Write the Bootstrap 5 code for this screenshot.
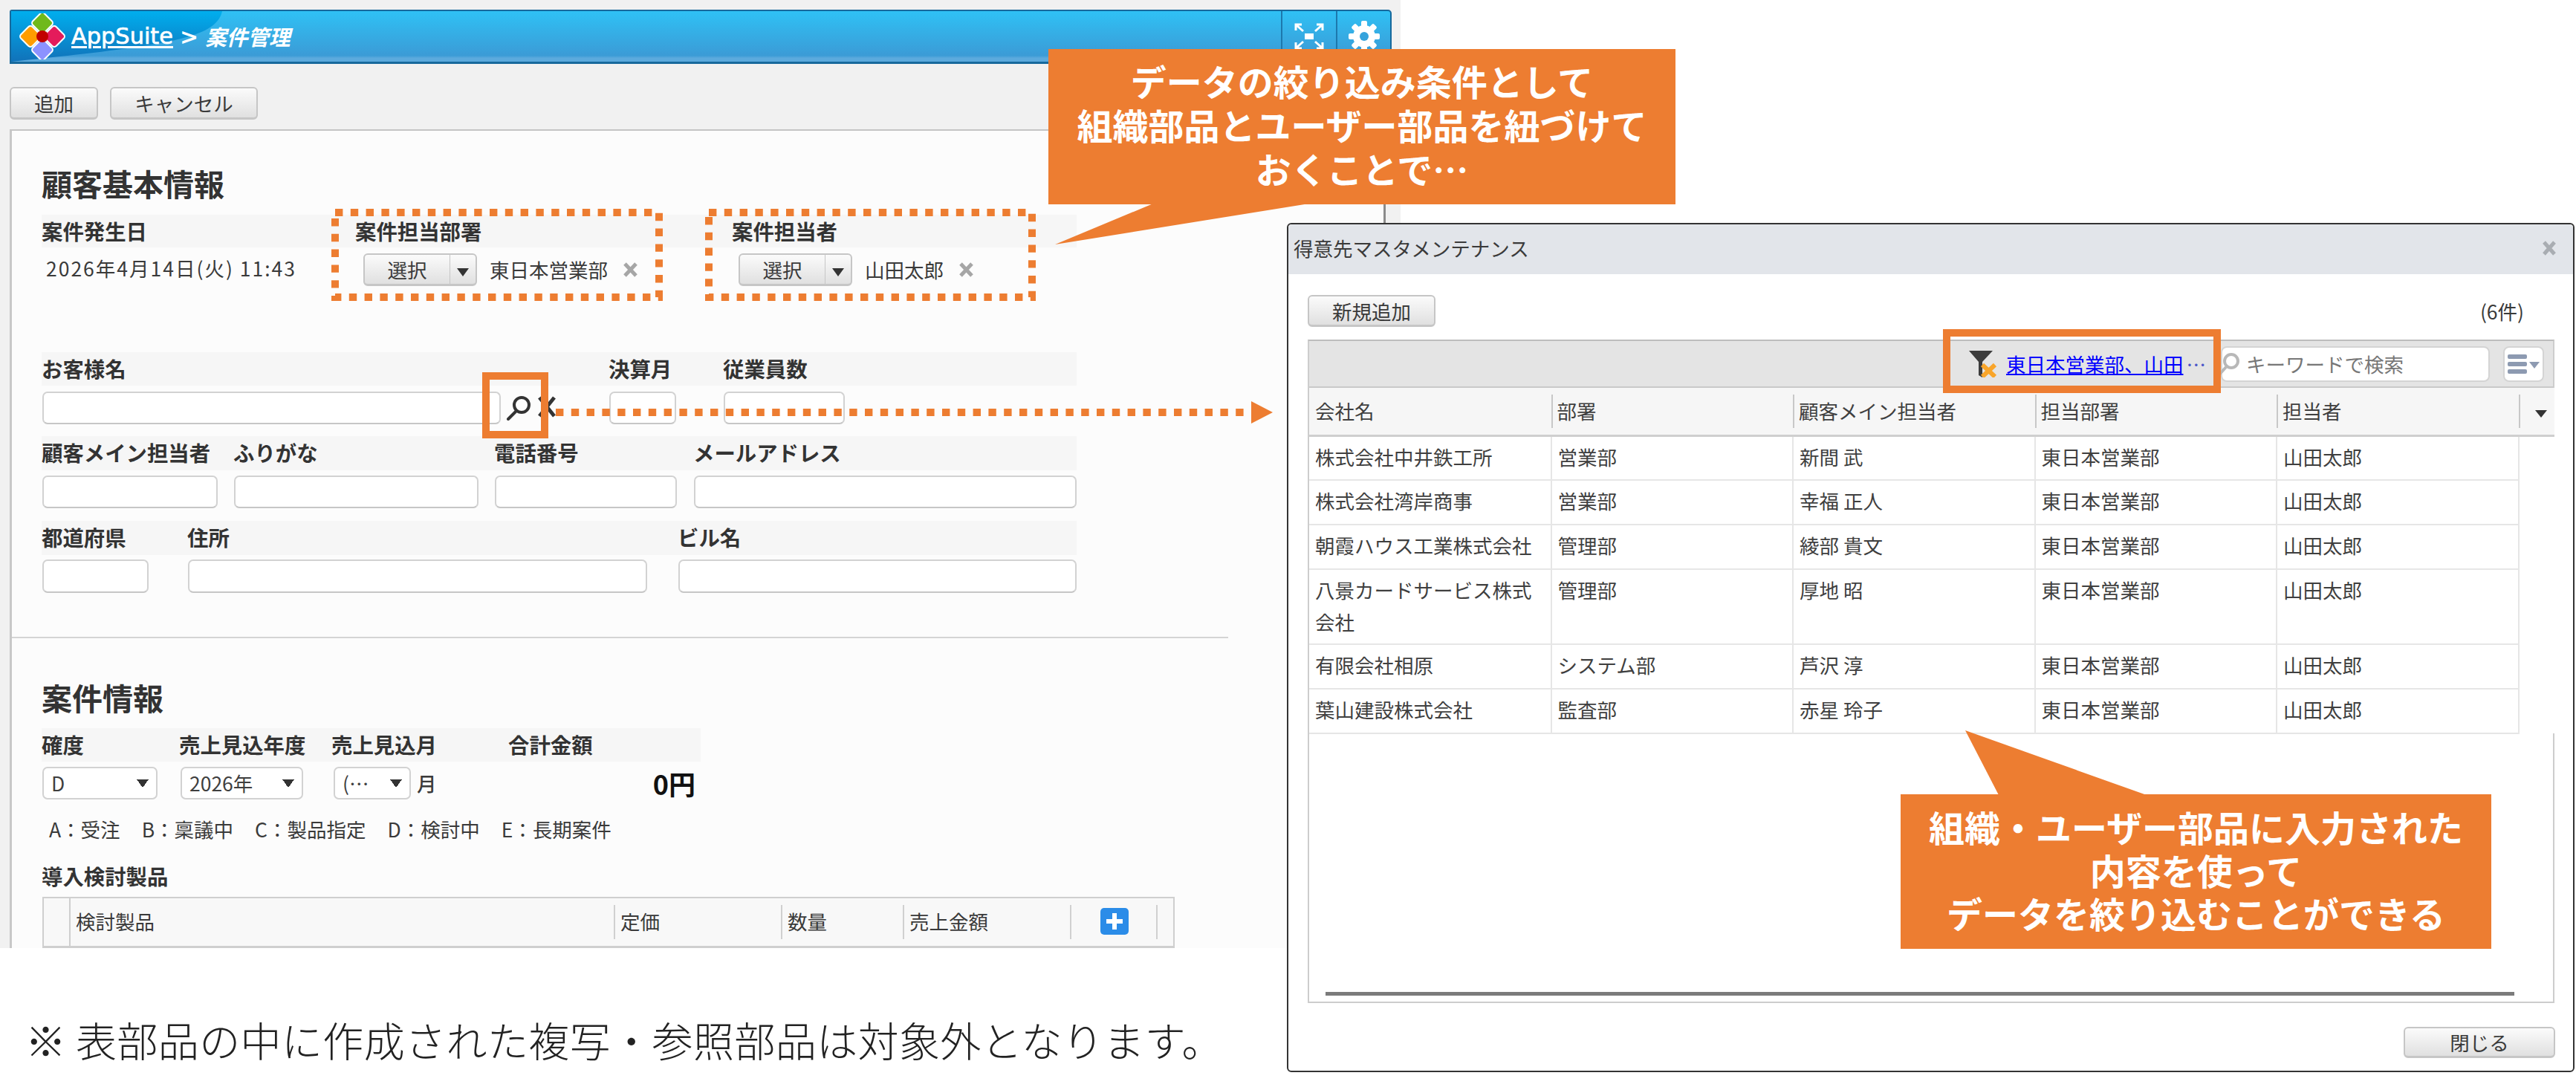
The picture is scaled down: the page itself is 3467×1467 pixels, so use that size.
<!DOCTYPE html>
<html lang="ja">
<head>
<meta charset="UTF-8">
<title>AppSuite 案件管理</title>
<link href="https://cdn.jsdelivr.net/npm/bootstrap@5.3.0/dist/css/bootstrap.min.css" rel="stylesheet">
<style>
    body {
        margin: 0;
        width: 3467px;
        height: 1467px;
        overflow: hidden;
        position: relative;
        background: #fff;
        color: #3a3a3a;
        font-family: "Noto Sans CJK JP", "Liberation Sans", sans-serif;
        font-size: 26.5px;
    }

    /* left application */
    .app-shell { width: 1885px; height: 1276px; overflow: hidden; background: #f1f1f1; padding: 13px 0 0 13px; }
    .app-head {
        position: relative;
        width: 1860px;
        height: 73px;
        border: 2px solid #17699c;
        border-bottom-width: 3px;
        border-radius: 3px 5px 0 0;
        background: linear-gradient(#2fc1f5, #3b9bd6 88%, #5caadd 93%, #5caadd);
        overflow: hidden;
    }
    .head-lens { position: absolute; left: 0; top: 0; width: 320px; height: 70px; }
    .head-line { position: relative; height: 100%; padding-left: 11px; color: #fff; }
    .app-link { color: #fff; font-family: "DejaVu Sans", sans-serif; font-size: 30.4px; margin-left: 8px; text-underline-offset: 3px; -webkit-text-stroke: 0.7px #fff; }
    .crumb-gt { font-family: "DejaVu Sans", sans-serif; font-size: 30px; font-weight: 700; margin-left: 9px; }
    .crumb-now { font-size: 28.6px; font-style: italic; font-weight: 700; margin-left: 9px; }
    .head-tool { width: 74px; height: 100%; border-left: 2px solid #1d78ad; }
    .head-gear { width: 73px; }

    .tool-row { margin-top: 31px; height: 44px; }
    .ui-btn {
        height: 44px;
        padding: 0;
        border: 2px solid #c6c6c6;
        border-bottom-width: 3px;
        border-radius: 6px;
        background: linear-gradient(#fbfbfb, #e0e0e0);
        color: #3a3a3a;
        font-size: 26.5px;
        line-height: 38px;
    }
    .btn-add { width: 119px; }
    .btn-cancel { width: 199px; }

    .form-sheet {
        width: 1852px;
        height: 1200px;
        margin-top: 13px;
        background: #fcfcfc;
        border-top: 2px solid #c4c4c4;
        border-left: 3px solid #c8c8c8;
        border-right: 3px solid #8b8b8b;
    }
    .sec-title { margin: 42px 0 15px 40px; height: 56px; font-size: 41px; line-height: 56px; font-weight: 700; color: #333; }
    .sec-title-b { margin: 51px 0 14px 40px; }
    .lbl-bar { display: grid; margin-left: 40px; width: 1393px; height: 45px; background: #f6f6f6; font-size: 28.4px; line-height: 44px; font-weight: 700; color: #333; white-space: nowrap; }
    .val-row { display: grid; margin-left: 40px; width: 1393px; align-items: center; }
    .cols-a { grid-template-columns: 422px 507px 1fr; }
    .cols-b { grid-template-columns: 763px 154px 1fr; }
    .cols-c { grid-template-columns: 258px 351px 268px 1fr; }
    .cols-d { grid-template-columns: 196px 660px 1fr; }
    .cols-e { grid-template-columns: 185px 205px 238px 1fr; width: 887px; }

    .bar-1 { height: 44px; }
    .gap-a { margin-top: 8px; height: 42px; }
    .bar-2 { margin-top: 91px; }
    .gap-i { margin-top: 8px; height: 44px; }
    .bar-3 { margin-top: 16px; height: 46px; }
    .bar-4 { margin-top: 17px; height: 46px; }
    .gap-i-4 { margin-top: 6px; height: 45px; }
    .gap-i-3 { margin-top: 7px; height: 44px; }

    .date-val { padding: 0 0 4px 6px; white-space: nowrap; letter-spacing: 2px; }
    .pick-a { padding-left: 11px; }
    .pick-b { padding-left: 9px; }
    .pick-name { margin-left: 17px; white-space: nowrap; }
    .pick-x { margin-left: 20px; }
    .pick-main { width: 117px; border-radius: 6px 0 0 6px; border-right-width: 1px; }
    .pick-caret { width: 37px; border-radius: 0 6px 6px 0; border-left-width: 1px; }
    .pick-caret::before { content: ""; display: inline-block; border: 8px solid transparent; border-top: 11px solid #333; border-bottom: 0; vertical-align: 2px; }

    .ui-input { height: 100%; margin-left: 1px; padding: 0 8px; border: 2px solid #d2d2d2; border-bottom-color: #c6c6c6; border-radius: 7px; background: #fff; box-shadow: none; }
    .w-90 { width: 90px; }
    .w-143 { width: 143px; }
    .w-163 { width: 163px; }
    .w-236 { width: 236px; }
    .w-245 { width: 245px; }
    .w-329 { width: 329px; }
    .w-515 { width: 515px; }
    .w-536 { width: 536px; }
    .w-617 { width: 617px; }
    .w-618 { width: 618px; margin-left: 1px; }
    .cust-cell { position: relative; }
    .cust-tools { position: absolute; left: 625px; top: 5px; }

    .sheet-hr { width: 1637px; height: 2px; margin: 59px 0 0; background: #d4d4d4; opacity: 1; border: 0; }

    .ui-select {
        height: 44px;
        padding: 0 0 0 10px;
        border: 2px solid #d2d2d2;
        border-radius: 7px;
        color: #3f3f3f;
        font-size: 26.5px;
        line-height: 38px;
        margin-left: 1px;
        background-color: #fff;
        background-image: linear-gradient(to top right, transparent 50%, #333 50%), linear-gradient(to top left, transparent 50%, #333 50%);
        background-size: 8px 11px;
        background-repeat: no-repeat;
        background-position: calc(100% - 18px) center, calc(100% - 10px) center;
    }
    .sel-a { width: 155px; }
    .sel-b { width: 165px; margin-left: 2px; }
    .sel-c { width: 104px; margin-left: 3px; }
    .sel-unit { margin-left: 8px; font-weight: 500; }
    .sum-val { font-size: 36px; font-weight: 700; color: #111; text-align: right; padding-right: 7px; line-height: 44px; }
    .bar-5 { height: 45px; }
    .legend-line { margin: 21px 0 0 50px; height: 40px; line-height: 38px; gap: 29px; white-space: nowrap; }
    .sub-title { margin: 23px 0 7px 40px; height: 40px; line-height: 38px; font-size: 28.4px; font-weight: 700; color: #333; }
    .prod-head { width: 1524px; height: 69px; margin: 0 0 0 41px; table-layout: fixed; border: 2px solid #cfcfcf; border-bottom: 3px solid #cfcfcf; background: #f8f8f8; }
    .prod-head th { padding: 9px 0 0; font-weight: 400; background: #f8f8f8; border: 0; color: #3a3a3a; vertical-align: top; }
    .prod-head th:first-child { padding: 0; border-right: 2px solid #cfcfcf; }
    .prod-head .th-inner { height: 46px; line-height: 44px; padding-left: 7px; border-right: 2px solid #d0d0d0; }
    .prod-head th:last-child .th-inner { border-right: 0; }
    .prod-head .plus-inner { padding: 0 0 0 39px; line-height: 36px; }
    .col-w36 { width: 36px; }
    .col-w734 { width: 734px; }
    .col-w225 { width: 225px; }
    .col-w164 { width: 164px; }
    .col-w116 { width: 116px; }

    /* popup window */
    .pop-win { position: absolute; left: 1732px; top: 300px; width: 1733px; height: 1143px; border: 2px solid #333; border-radius: 6px; background: #fff; overflow: hidden; }
    .pop-head { height: 67px; padding: 0 22px 3px 7px; background: #e2e5ea; border: 0; border-radius: 0; color: #3a3a3a; }
    .pop-body { padding: 28px 26px 0; }
    .btn-new { width: 172px; height: 43px; line-height: 35px; }
    .pop-count { margin-right: 40px; white-space: nowrap; }
    .grid-box { width: 1678px; height: 893px; margin-top: 17px; border: 2px solid #cdcdcd; border-top-color: #bdbdbd; position: relative; }
    .grid-tool { height: 63px; background: #e4e4e4; border-bottom: 2px solid #c9c9c9; padding-right: 12px; }
    .filter-link { color: #00f; text-decoration: underline; margin-left: 12px; white-space: nowrap; }
    .filter-more { color: #4a56c8; margin-right: 20px; margin-left: 4px; }
    .search-box { width: 362px; height: 48px; border: 2px solid #d4d4d4; border-radius: 8px; background: #fff; color: #777; white-space: nowrap; }
    .search-box svg { margin-left: -8px; margin-right: 6px; }
    .menu-btn { width: 55px; height: 48px; margin-left: 18px; border: 2px solid #d4d4d4; border-radius: 8px; background: #fff; }
    .cust-grid { width: 1676px; margin: 0; table-layout: fixed; color: #3f3f3f; border-color: #e6e6e6; }
    .cust-grid th { height: 64px; padding: 9px 0 0; background: #f6f6f6; font-weight: 400; border: 0; border-bottom: 3px solid #cfcfcf; vertical-align: top; color: #3f3f3f; }
    .cust-grid th .th-inner { height: 45px; line-height: 43px; padding-left: 8px; margin-right: -2px; border-right: 2px solid #c8c8c8; position: relative; }
    .cust-grid th:last-child .th-inner { border-right: 0; padding-left: 22px; margin-right: 0; }
    .cust-grid td { height: 60px; padding: 5px 8px 8px; line-height: 43px; border: 0; border-right: 2px solid #e6e6e6; border-bottom: 2px solid #e6e6e6; vertical-align: top; background: #fff; color: #3f3f3f; }
    .cust-grid td:last-child { border: 0; padding: 0; }
    .col-main { width: 325.5px; }
    .grid-scroll { position: absolute; left: 22px; right: 52px; bottom: 8px; height: 5px; background: #7b7b7b; }
    .pop-foot { position: absolute; right: 24px; bottom: 17px; }
    .btn-close-win { width: 204px; height: 42px; line-height: 36px; }

    /* annotations */
    .mark-layer { position: absolute; left: 0; top: 0; width: 3467px; height: 1467px; pointer-events: none; }
    .talk-box { position: absolute; background: #ed7d31; color: #fff; font-weight: 700; font-size: 48px; line-height: 59px; text-align: center; white-space: nowrap; }
    .talk-box::before { content: ""; position: absolute; background: #ed7d31; }
    .talk-a { left: 1411px; top: 66px; width: 844px; height: 209px; padding-top: 13px; }
    .talk-a::before { left: 9px; top: 208px; width: 342px; height: 55px; clip-path: polygon(132px 0, 100% 0, 0 100%); }
    .talk-b { left: 2558px; top: 1069px; width: 795px; height: 208px; padding-top: 14px; line-height: 58px; }
    .talk-b::before { left: 87px; top: -86px; width: 244px; height: 87px; clip-path: polygon(0 0, 100% 100%, 45px 100%); }
    .foot-note { margin: 87px 0 0 34px; height: 70px; font-size: 55px; letter-spacing: 0.4px; line-height: 70px; font-weight: 300; color: #222; white-space: nowrap; }
</style>
</head>
<body>

<div class="app-shell">
    <div class="app-head">
        <svg class="head-lens" viewBox="0 0 320 70">
            <defs>
                <linearGradient id="lensFill" x1="0" y1="0" x2="0" y2="1">
                    <stop offset="0" stop-color="#00aeee"/>
                    <stop offset="1" stop-color="#1172b9"/>
                </linearGradient>
            </defs>
            <path d="M0 0H284C276 36 214 46 0 68Z" fill="url(#lensFill)"/>
        </svg>
        <div class="head-line d-flex align-items-center">
            <svg width="62" height="62" viewBox="0 0 62 62">
                <g stroke="#fff" stroke-width="2">
                    <rect x="20" y="2" width="22" height="22" rx="4" fill="#6fb91b" transform="rotate(45 31 13)"/>
                    <rect x="36" y="20" width="22" height="22" rx="4" fill="#e41b5b" transform="rotate(45 47 31)"/>
                    <rect x="20" y="38" width="22" height="22" rx="4" fill="#8c92ff" transform="rotate(45 31 49)"/>
                    <rect x="4" y="20" width="22" height="22" rx="4" fill="#ff9d00" transform="rotate(45 15 31)"/>
                </g>
                <ellipse cx="31" cy="31" rx="8" ry="8" fill="#c10000"/>
            </svg>
            <a class="app-link" href="#">AppSuite</a>
            <span class="crumb-gt">&gt;</span>
            <span class="crumb-now">案件管理</span>
            <div class="ms-auto d-flex h-100">
                <div class="head-tool d-flex align-items-center justify-content-center">
                    <svg width="40" height="36" viewBox="0 0 40 36" fill="none" stroke="#fff" stroke-width="3">
                        <rect x="14" y="14" width="12" height="8" fill="#fff" stroke="none"/>
                        <path d="M2 10V2H10M3 3L12 11M38 10V2H30M37 3L28 11M2 26V34H10M3 33L12 25M38 26V34H30M37 33L28 25"/>
                    </svg>
                </div>
                <div class="head-tool head-gear d-flex align-items-center justify-content-center">
                    <svg width="42" height="42" viewBox="0 0 42 42">
                        <g fill="#fff">
                            <circle cx="21" cy="21" r="15"/>
                            <rect x="17" y="0" width="8" height="42" rx="2"/>
                            <rect x="17" y="0" width="8" height="42" rx="2" transform="rotate(45 21 21)"/>
                            <rect x="17" y="0" width="8" height="42" rx="2" transform="rotate(90 21 21)"/>
                            <rect x="17" y="0" width="8" height="42" rx="2" transform="rotate(135 21 21)"/>
                        </g>
                        <circle cx="21" cy="21" r="6" fill="#35a3dc"/>
                    </svg>
                </div>
            </div>
        </div>
    </div>

    <div class="tool-row d-flex gap-3">
        <button class="btn ui-btn btn-add" type="button">追加</button>
        <button class="btn ui-btn btn-cancel" type="button">キャンセル</button>
    </div>

    <div class="form-sheet">
        <div class="sec-title">顧客基本情報</div>
        <div class="lbl-bar cols-a bar-1"><span>案件発生日</span><span>案件担当部署</span><span>案件担当者</span></div>
        <div class="val-row cols-a gap-a">
            <div class="date-val">2026年4月14日(火) 11:43</div>
            <div class="pick-a d-flex align-items-center">
                <div class="btn-group">
                    <button class="btn ui-btn pick-main" type="button">選択</button>
                    <button class="btn ui-btn pick-caret" type="button"></button>
                </div>
                <span class="pick-name">東日本営業部</span>
                <svg class="pick-x" width="21" height="22" viewBox="0 0 21 22"><path d="M3 3L18 19M18 3L3 19" stroke="#a6a6a6" stroke-width="5"/></svg>
            </div>
            <div class="pick-b d-flex align-items-center">
                <div class="btn-group">
                    <button class="btn ui-btn pick-main" type="button">選択</button>
                    <button class="btn ui-btn pick-caret" type="button"></button>
                </div>
                <span class="pick-name">山田太郎</span>
                <svg class="pick-x" width="21" height="22" viewBox="0 0 21 22"><path d="M3 3L18 19M18 3L3 19" stroke="#a6a6a6" stroke-width="5"/></svg>
            </div>
        </div>

        <div class="lbl-bar cols-b bar-2"><span>お客様名</span><span>決算月</span><span>従業員数</span></div>
        <div class="val-row cols-b gap-i">
            <div class="cust-cell h-100">
                <input class="form-control ui-input w-617" type="text">
                <div class="cust-tools d-flex gap-2">
                    <svg width="34" height="34" viewBox="0 0 34 34" fill="none" stroke="#333" stroke-width="4"><circle cx="21" cy="13" r="10"/><path d="M14 21L3 32" stroke-linecap="round"/></svg>
                    <svg width="26" height="30" viewBox="0 0 26 30" fill="none" stroke="#333" stroke-width="5"><path d="M3 3L23 28M23 3L3 28"/></svg>
                </div>
            </div>
            <div class="h-100"><input class="form-control ui-input w-90" type="text"></div>
            <div class="h-100"><input class="form-control ui-input w-163" type="text"></div>
        </div>

        <div class="lbl-bar cols-c bar-3"><span>顧客メイン担当者</span><span>ふりがな</span><span>電話番号</span><span>メールアドレス</span></div>
        <div class="val-row cols-c gap-i-3">
            <div class="h-100"><input class="form-control ui-input w-236" type="text"></div>
            <div class="h-100"><input class="form-control ui-input w-329" type="text"></div>
            <div class="h-100"><input class="form-control ui-input w-245" type="text"></div>
            <div class="h-100"><input class="form-control ui-input w-515" type="text"></div>
        </div>

        <div class="lbl-bar cols-d bar-4"><span>都道府県</span><span>住所</span><span>ビル名</span></div>
        <div class="val-row cols-d gap-i-4">
            <div class="h-100"><input class="form-control ui-input w-143" type="text"></div>
            <div class="h-100"><input class="form-control ui-input w-618" type="text"></div>
            <div class="h-100"><input class="form-control ui-input w-536" type="text"></div>
        </div>

        <hr class="sheet-hr">

        <div class="sec-title sec-title-b">案件情報</div>
        <div class="lbl-bar cols-e bar-5"><span>確度</span><span>売上見込年度</span><span>売上見込月</span><span>合計金額</span></div>
        <div class="val-row cols-e gap-i-3">
            <div><select class="form-select ui-select sel-a"><option>D</option></select></div>
            <div><select class="form-select ui-select sel-b"><option>2026年</option></select></div>
            <div class="d-flex align-items-center"><select class="form-select ui-select sel-c"><option>(…</option></select><span class="sel-unit">月</span></div>
            <div class="sum-val">0円</div>
        </div>
        <div class="legend-line d-flex">
            <span>A：受注</span><span>B：稟議中</span><span>C：製品指定</span><span>D：検討中</span><span>E：長期案件</span>
        </div>
        <div class="sub-title">導入検討製品</div>
        <table class="table prod-head">
            <colgroup>
                <col class="col-w36"><col class="col-w734"><col class="col-w225"><col class="col-w164"><col class="col-w225"><col class="col-w116"><col>
            </colgroup>
            <tr>
                <th></th>
                <th><div class="th-inner">検討製品</div></th>
                <th><div class="th-inner">定価</div></th>
                <th><div class="th-inner">数量</div></th>
                <th><div class="th-inner">売上金額</div></th>
                <th><div class="th-inner plus-inner">
                    <svg width="38" height="36" viewBox="0 0 38 36"><rect width="38" height="36" rx="5" fill="#2b8ce8"/><path d="M19 7V29M8 18H30" stroke="#fff" stroke-width="6"/></svg>
                </div></th>
                <th><div class="th-inner"></div></th>
            </tr>
        </table>
    </div>
</div>

<p class="foot-note">※ 表部品の中に作成された複写・参照部品は対象外となります。</p>

<div class="card pop-win">
    <div class="card-header pop-head d-flex align-items-center justify-content-between">
        <span>得意先マスタメンテナンス</span>
        <svg width="20" height="22" viewBox="0 0 20 22"><path d="M3 3L17 19M17 3L3 19" stroke="#a9adb2" stroke-width="5"/></svg>
    </div>
    <div class="card-body pop-body">
        <div class="d-flex align-items-center justify-content-between">
            <button class="btn ui-btn btn-new" type="button">新規追加</button>
            <span class="pop-count">(6件)</span>
        </div>
        <div class="grid-box">
            <div class="grid-tool d-flex align-items-center justify-content-end">
                <svg width="38" height="36" viewBox="0 0 38 36">
                    <path d="M0 0H32L18 15V36L13 33V15Z" fill="#3c3c3c"/>
                    <path d="M18 19L35 35M35 19L18 35" stroke="#f9a52a" stroke-width="6"/>
                </svg>
                <a class="filter-link" href="#">東日本営業部、山田</a><span class="filter-more">…</span>
                <div class="search-box d-flex align-items-center">
                    <svg width="34" height="34" viewBox="0 0 34 34" fill="none" stroke="#b8b8b8" stroke-width="4"><circle cx="20" cy="13" r="9"/><path d="M13 21L4 31"/></svg>
                    <span>キーワードで検索</span>
                </div>
                <div class="menu-btn d-flex align-items-center justify-content-center">
                    <svg width="44" height="30" viewBox="0 0 44 30" fill="#8d9ab1"><rect y="2" width="26" height="6" rx="2"/><rect y="12" width="26" height="6" rx="2"/><rect y="22" width="26" height="6" rx="2"/><path d="M29 12H43L36 21Z"/></svg>
                </div>
            </div>
            <table class="table cust-grid">
                <colgroup><col class="col-main"><col class="col-main"><col class="col-main"><col class="col-main"><col class="col-main"><col></colgroup>
                <thead>
                    <tr>
                        <th><div class="th-inner">会社名</div></th>
                        <th><div class="th-inner">部署</div></th>
                        <th><div class="th-inner">顧客メイン担当者</div></th>
                        <th><div class="th-inner">担当部署</div></th>
                        <th><div class="th-inner">担当者</div></th>
                        <th><div class="th-inner"><svg width="16" height="10" viewBox="0 0 16 10"><path d="M0 0H16L8 10Z" fill="#333"/></svg></div></th>
                    </tr>
                </thead>
                <tbody>
                    <tr><td>株式会社中井鉄工所</td><td>営業部</td><td>新間 武</td><td>東日本営業部</td><td>山田太郎</td><td></td></tr>
                    <tr><td>株式会社湾岸商事</td><td>営業部</td><td>幸福 正人</td><td>東日本営業部</td><td>山田太郎</td><td></td></tr>
                    <tr><td>朝霞ハウス工業株式会社</td><td>管理部</td><td>綾部 貴文</td><td>東日本営業部</td><td>山田太郎</td><td></td></tr>
                    <tr><td>八景カードサービス株式会社</td><td>管理部</td><td>厚地 昭</td><td>東日本営業部</td><td>山田太郎</td><td></td></tr>
                    <tr><td>有限会社相原</td><td>システム部</td><td>芦沢 淳</td><td>東日本営業部</td><td>山田太郎</td><td></td></tr>
                    <tr><td>葉山建設株式会社</td><td>監査部</td><td>赤星 玲子</td><td>東日本営業部</td><td>山田太郎</td><td></td></tr>
                </tbody>
            </table>
            <div class="grid-scroll"></div>
        </div>
    </div>
    <div class="pop-foot">
        <button class="btn ui-btn btn-close-win" type="button">閉じる</button>
    </div>
</div>

<svg class="mark-layer" viewBox="0 0 3467 1467" fill="none" stroke="#ed7d31">
    <rect x="451" y="286" width="436" height="114" stroke-width="10" stroke-dasharray="10.4 10.4"/>
    <rect x="954" y="286" width="435" height="114" stroke-width="10" stroke-dasharray="10.4 10.4"/>
    <rect x="654" y="506" width="79" height="79" stroke-width="10"/>
    <rect x="2620" y="448" width="364" height="76" stroke-width="10"/>
    <path d="M748 555H1686" stroke-width="10" stroke-dasharray="10.4 10.4"/>
    <path d="M1684 540L1713 555L1684 570Z" fill="#ed7d31" stroke="none"/>
</svg>

<div class="talk-box talk-a">データの絞り込み条件として<br>組織部品とユーザー部品を紐づけて<br>おくことで…</div>
<div class="talk-box talk-b">組織・ユーザー部品に入力された<br>内容を使って<br>データを絞り込むことができる</div>

<script src="https://cdn.jsdelivr.net/npm/bootstrap@5.3.0/dist/js/bootstrap.bundle.min.js"></script>
</body>
</html>
